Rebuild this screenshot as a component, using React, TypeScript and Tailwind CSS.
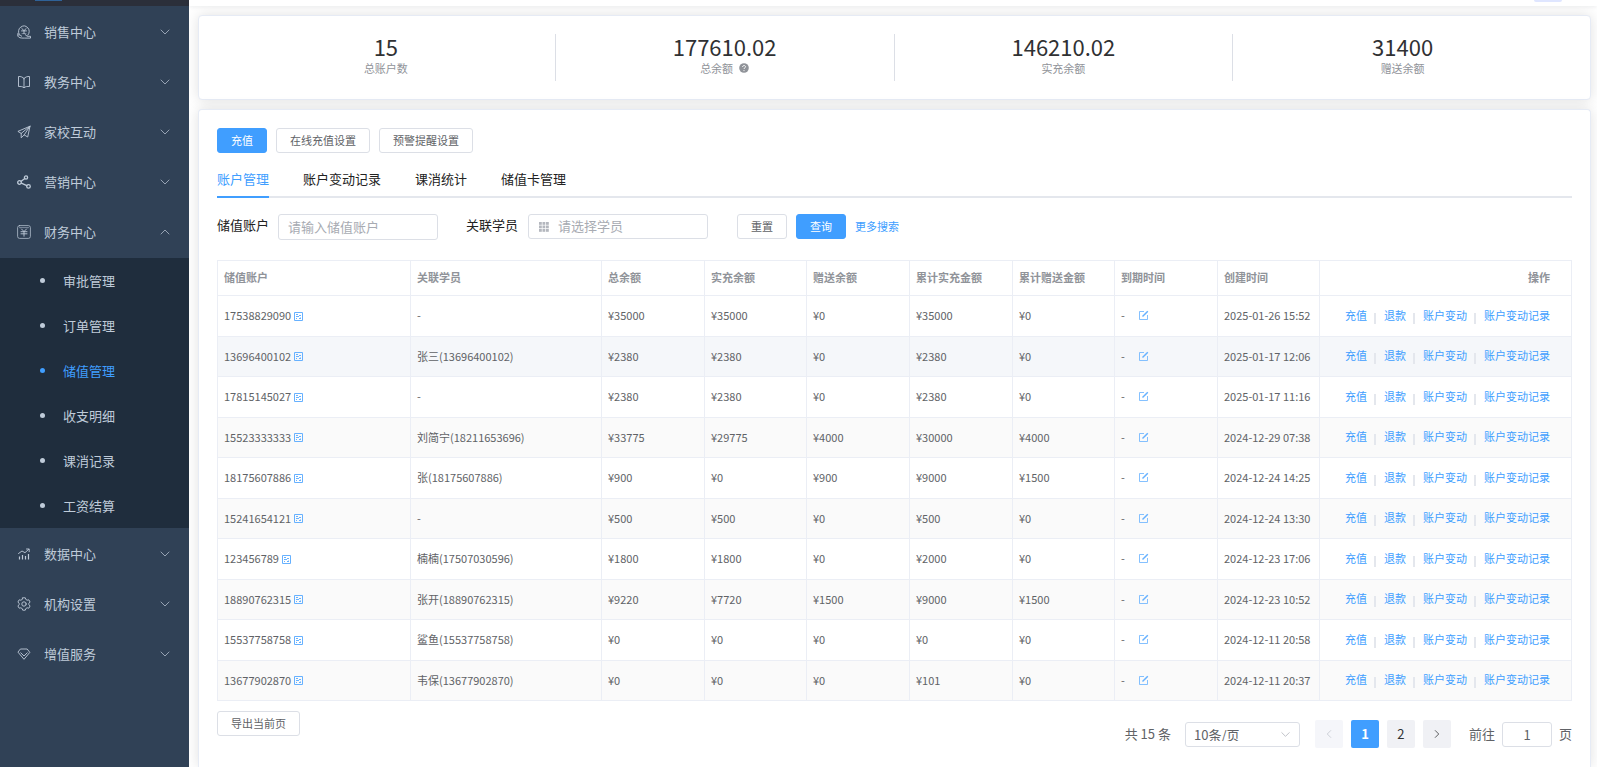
import { useState, type ReactNode } from 'react'
import clsx from 'clsx'

type Account = {
  account: string
  student: string
  total: number
  real: number
  gift: number
  sumReal: number
  sumGift: number
  createdAt: string
}

const accounts: Account[] = [
  { account: '17538829090', student: '-', total: 35000, real: 35000, gift: 0, sumReal: 35000, sumGift: 0, createdAt: '2025-01-26 15:52' },
  { account: '13696400102', student: '张三(13696400102)', total: 2380, real: 2380, gift: 0, sumReal: 2380, sumGift: 0, createdAt: '2025-01-17 12:06' },
  { account: '17815145027', student: '-', total: 2380, real: 2380, gift: 0, sumReal: 2380, sumGift: 0, createdAt: '2025-01-17 11:16' },
  { account: '15523333333', student: '刘简宁(18211653696)', total: 33775, real: 29775, gift: 4000, sumReal: 30000, sumGift: 4000, createdAt: '2024-12-29 07:38' },
  { account: '18175607886', student: '张(18175607886)', total: 900, real: 0, gift: 900, sumReal: 9000, sumGift: 1500, createdAt: '2024-12-24 14:25' },
  { account: '15241654121', student: '-', total: 500, real: 500, gift: 0, sumReal: 500, sumGift: 0, createdAt: '2024-12-24 13:30' },
  { account: '123456789', student: '楠楠(17507030596)', total: 1800, real: 1800, gift: 0, sumReal: 2000, sumGift: 0, createdAt: '2024-12-23 17:06' },
  { account: '18890762315', student: '张开(18890762315)', total: 9220, real: 7720, gift: 1500, sumReal: 9000, sumGift: 1500, createdAt: '2024-12-23 10:52' },
  { account: '15537758758', student: '鲨鱼(15537758758)', total: 0, real: 0, gift: 0, sumReal: 0, sumGift: 0, createdAt: '2024-12-11 20:58' },
  { account: '13677902870', student: '韦保(13677902870)', total: 0, real: 0, gift: 0, sumReal: 101, sumGift: 0, createdAt: '2024-12-11 20:37' },
]

const columns = [
  { label: '储值账户', width: 'w-[193px]' },
  { label: '关联学员', width: 'w-[191px]' },
  { label: '总余额', width: 'w-[103px]' },
  { label: '实充余额', width: 'w-[102px]' },
  { label: '赠送余额', width: 'w-[103px]' },
  { label: '累计实充金额', width: 'w-[103px]' },
  { label: '累计赠送金额', width: 'w-[102px]' },
  { label: '到期时间', width: 'w-[103px]' },
  { label: '创建时间', width: 'w-[102px]' },
  { label: '操作', width: 'w-auto' },
]

const stats = [
  { value: '15', label: '总账户数' },
  { value: '177610.02', label: '总余额', help: true },
  { value: '146210.02', label: '实充余额' },
  { value: '31400', label: '赠送余额' },
]

const tabs = ['账户管理', '账户变动记录', '课消统计', '储值卡管理']
const financeItems = ['审批管理', '订单管理', '储值管理', '收支明细', '课消记录', '工资结算']
const actions = ['充值', '退款', '账户变动', '账户变动记录']

function Glyph({ children, className = 'size-[14px]' }: { children: ReactNode; className?: string }) {
  return (
    <svg
      viewBox="0 0 14 14"
      fill="none"
      stroke="currentColor"
      strokeWidth=".9"
      strokeLinecap="round"
      strokeLinejoin="round"
      className={clsx('shrink-0', className)}
      aria-hidden="true"
    >
      {children}
    </svg>
  )
}

const icons = {
  sales: (
    <Glyph>
      <path d="M2.200 9.200A5.400 5.400 0 1 1 10.800 10.200" />
      <path d="M4.800 3.500 7 5.600l2.200-2.100M4.500 5.900h5M7 5.600v3" />
      <path d="M5 8.600h4" strokeOpacity=".6" />
      <path d="M1 8.200c-.5 1.600-.4 3 .6 3.800 1.600 1.200 4 1.100 6 1.100h5.900v-1.800H10.200L8.200 9.600M1 10c1.500-.7 2.500.2 3.700 1.200" />
    </Glyph>
  ),
  book: (
    <Glyph>
      <path d="M7 3.500C5.800 2 3.500 1.300 1.500 1.500v10c2-.2 4.200 0 5.500 1.300 1.300-1.300 3.500-1.500 5.500-1.300v-10C10.500 1.300 8.200 2 7 3.500zV12.500" />
    </Glyph>
  ),
  plane: (
    <Glyph>
      <path d="M13 1.200.9 6.400l3.300 2L13 1.200 10.700 12 7.200 9.900M4.200 8.400v4.400l3-2.900L13 1.200" />
    </Glyph>
  ),
  share: (
    <Glyph>
      <circle cx="9" cy="2.500" r="1.600" strokeWidth="1.300" />
      <circle cx="2.500" cy="7.500" r="1.800" strokeWidth="1.300" />
      <circle cx="11.500" cy="11.400" r="1.800" strokeWidth="1.300" />
      <path d="M7.800 3.600 4.200 6.300M4.400 8.200l5.400 2.400" strokeWidth="1.300" />
    </Glyph>
  ),
  finance: (
    <Glyph>
      <rect x=".6" y=".6" width="12.800" height="12.800" rx="2" strokeOpacity=".8" />
      <path d="M2.500 2.600h9" strokeOpacity=".6" />
      <path d="M4.500 4 7 6.500 9.500 4M4 6.700h6M4 8.800h6M7 6.500v4.700" />
    </Glyph>
  ),
  data: (
    <Glyph>
      <path d="M2.500 12.500V9.500M5.500 12.500V8M8.500 12.500V9M11.500 12.500V7" strokeWidth="1.200" strokeLinecap="butt" />
      <path d="M1.500 6.500 5 4l3 1.700 3.800-3.500M9.500 2h2.700v2.700" />
    </Glyph>
  ),
  setting: (
    <Glyph>
      <circle cx="7" cy="7" r="2.200" />
      <path d="M5.700.8h2.600l.5 1.600 1.300.8 1.700-.4 1.300 2.200-1.200 1.300v1.400l1.200 1.300-1.300 2.200-1.700-.4-1.300.8-.5 1.600H5.700l-.5-1.600-1.300-.8-1.700.4L.9 9l1.200-1.300V6.300L.9 5l1.300-2.200 1.700.4 1.300-.8z" />
    </Glyph>
  ),
  diamond: (
    <Glyph>
      <path d="M3.800 2h6.400l2.600 3.400L7 12.300 1.200 5.400z" />
      <path d="M3.800 5.800 7 9l3.200-3.200" />
    </Glyph>
  ),
}

function Chevron({ className, direction = 'down' }: { className?: string; direction?: 'down' | 'up' | 'left' | 'right' }) {
  const paths = {
    down: 'M3 5l4 4 4-4',
    up: 'M3 9l4-4 4 4',
    left: 'M9 3L5 7l4 4',
    right: 'M5 3l4 4-4 4',
  }
  return (
    <Glyph className={className ?? 'size-[14px] opacity-80'}>
      <path d={paths[direction]} />
    </Glyph>
  )
}

function CardIcon() {
  return (
    <svg viewBox="0 0 9 9" fill="none" stroke="currentColor" className="size-[9px] shrink-0" aria-hidden="true">
      <path d="M.5.5h8v8h-8z" />
      <path d="M2 2.500h2M5 3.500h2M2 4.500h3" />
      <path d="M5 6.500h2M6.500 5.500v1.500M2 6.500h1" />
    </svg>
  )
}

function EditIcon() {
  return (
    <svg viewBox="0 0 10 10" fill="none" stroke="currentColor" className="size-[10px]" aria-hidden="true">
      <path d="M5 1.500H.5v8h8V5" strokeOpacity=".8" />
      <path d="M3.500 6.500 8.800 1.200" strokeWidth="1.500" />
    </svg>
  )
}

function MenuItem({ icon, label, open }: { icon: ReactNode; label: string; open?: boolean }) {
  return (
    <button type="button" className="flex h-[50px] w-full items-center pl-[17px] pr-[17px] text-left">
      {icon}
      <span className="ml-[13px] flex-1">{label}</span>
      <Chevron direction={open ? 'up' : 'down'} />
    </button>
  )
}

function Sidebar() {
  return (
    <aside className="w-[189px] shrink-0 bg-[#304156] text-[13px] text-[#bfcbd9]">
      <div className="h-1.5 bg-[#2b2f3a] pl-[35px]">
        <div className="h-px w-[27px] bg-[#2f6298]" />
      </div>
      <nav className="pt-px">
        <MenuItem icon={icons.sales} label="销售中心" />
        <MenuItem icon={icons.book} label="教务中心" />
        <MenuItem icon={icons.plane} label="家校互动" />
        <MenuItem icon={icons.share} label="营销中心" />
        <MenuItem icon={icons.finance} label="财务中心" open />
        <ul className="my-px bg-[#1f2d3d]">
          {financeItems.map((item) => (
            <li key={item}>
              <a
                href="#"
                className={clsx('flex h-[45px] items-center gap-[18px] pl-10', item === '储值管理' && 'text-[#409eff]')}
              >
                <span className="size-[5px] rounded-full bg-current" />
                {item}
              </a>
            </li>
          ))}
        </ul>
        <MenuItem icon={icons.data} label="数据中心" />
        <MenuItem icon={icons.setting} label="机构设置" />
        <MenuItem icon={icons.diamond} label="增值服务" />
      </nav>
    </aside>
  )
}

function Button({ children, primary }: { children: ReactNode; primary?: boolean }) {
  return (
    <button
      type="button"
      className={clsx(
        'h-[25px] rounded-[3px] border px-[13px] pb-px text-[11px] leading-none',
        primary ? 'border-[#409eff] bg-[#409eff] text-white' : 'border-[#dcdfe6] bg-white text-[#606266]',
      )}
    >
      {children}
    </button>
  )
}

function Stats() {
  return (
    <section className="grid grid-cols-4 divide-x divide-[#dcdfe6] rounded border border-[#e6ebf5] bg-white p-[18px] text-center shadow-[0_0_14px_rgba(0,0,0,0.12)]">
      {stats.map((stat) => (
        <div key={stat.label} className="h-[47px]">
          <div className="text-[22px] leading-6 text-[#303133]">{stat.value}</div>
          <div className="flex items-center justify-center gap-1.5 pt-px text-[11px] leading-[18px] text-[#909399]">
            {stat.label}
            {stat.help && (
              <svg viewBox="0 0 10 10" className="size-[10px]" aria-hidden="true">
                <circle cx="5" cy="5" r="4.800" fill="#909399" />
                <path d="M3.600 4c0-2 2.900-1.900 2.900-.2C6.500 4.900 5 4.800 5 6" fill="none" stroke="#fff" />
                <circle cx="5" cy="7.600" r=".6" fill="#fff" />
              </svg>
            )}
          </div>
        </div>
      ))}
    </section>
  )
}

function Filters() {
  return (
    <form className="mt-4 flex items-start text-[13px]">
      <label htmlFor="account" className="mr-[9px] leading-[22px] text-[#222]">
        储值账户
      </label>
      <input
        id="account"
        placeholder="请输入储值账户"
        className="h-[26px] w-40 rounded-[3px] border border-[#dcdfe6] px-[9px] pb-0.5 outline-none placeholder:text-[#a8abb2]"
      />
      <label htmlFor="student" className="ml-7 mr-[10px] leading-[22px] text-[#222]">
        关联学员
      </label>
      <div className="flex h-[25px] w-[180px] items-center gap-[9px] rounded-[3px] border border-[#dcdfe6] px-[10px]">
        <svg viewBox="0 0 10 10" fill="#b4b7be" className="size-[10px] shrink-0" aria-hidden="true">
          {[0, 3.5, 7].map((y) => [0, 3.5, 7].map((x) => <rect key={`${x}-${y}`} x={x} y={y} width="2.800" height="2.800" />))}
        </svg>
        <input id="student" placeholder="请选择学员" className="w-full min-w-0 pb-0.5 outline-none placeholder:text-[#a8abb2]" />
      </div>
      <div className="ml-[29px] flex items-center gap-[9px]">
        <Button>重置</Button>
        <Button primary>查询</Button>
        <a href="#" className="pb-px text-[11px] text-[#409eff]">
          更多搜索
        </a>
      </div>
    </form>
  )
}

function AccountTable() {
  return (
    <table className="mt-5 w-full table-fixed border-separate border-spacing-0 border-l border-t border-[#ebeef5] text-left text-[11px] leading-4 text-[#606266]">
      <thead>
        <tr className="h-[35px] text-[#909399]">
          {columns.map((col) => (
            <th
              key={col.label}
              className={clsx('border-b border-r border-[#ebeef5] px-[6px] pb-0.5 pt-0 font-bold last:pr-[21px] last:text-right', col.width)}
            >
              {col.label}
            </th>
          ))}
        </tr>
      </thead>
      <tbody className="[&_td]:border-b [&_td]:border-r [&_td]:border-[#ebeef5] [&_td]:px-[6px] [&_td]:pb-0.5 [&_td]:pt-0">
        {accounts.map((row, i) => (
          <tr key={row.account} className={clsx('h-10 odd:h-[41px]', i === 1 ? 'bg-[#f5f7fa]' : 'even:bg-[#fafafa]')}>
            <td>
              <div className="flex items-center gap-[3px]">
                {row.account}
                <button type="button" aria-label="查看储值卡" className="pt-0.5 text-[#66b1ff]">
                  <CardIcon />
                </button>
              </div>
            </td>
            <td>{row.student}</td>
            <td>¥{row.total}</td>
            <td>¥{row.real}</td>
            <td>¥{row.gift}</td>
            <td>¥{row.sumReal}</td>
            <td>¥{row.sumGift}</td>
            <td>
              <div className="flex items-center gap-[14px]">
                -
                <button type="button" aria-label="修改到期时间" className="text-[#66b1ff]">
                  <EditIcon />
                </button>
              </div>
            </td>
            <td>{row.createdAt}</td>
            <td>
              <div className="flex justify-end pr-[15px] text-[#409eff]">
                {actions.map((action, n) => (
                  <div key={action} className="flex">
                    {n > 0 && <span className="ml-[7px] mr-2 mt-1.5 h-[11px] w-0.5 bg-[#e4e7ed]" />}
                    <a href="#">{action}</a>
                  </div>
                ))}
              </div>
            </td>
          </tr>
        ))}
      </tbody>
    </table>
  )
}

function Pagination() {
  const [page, setPage] = useState(1)
  return (
    <div className="mt-[9px] flex items-center text-[13px] text-[#606266]">
      <span className="mr-[14px]">共 15 条</span>
      <div className="relative mr-[15px]">
        <select aria-label="每页条数" className="h-[25px] w-[115px] appearance-none rounded-[3px] border border-[#dcdfe6] bg-white px-2 leading-none">
          <option>10条/页</option>
          <option>20条/页</option>
        </select>
        <Chevron className="pointer-events-none absolute right-2 top-1.5 size-[13px] text-[#b4b7be]" />
      </div>
      <div className="flex gap-2">
        <button type="button" disabled aria-label="上一页" className="flex size-7 items-center justify-center rounded-xs bg-[#f5f6fa] text-[#c0c4cc]">
          <Chevron direction="left" className="size-3" />
        </button>
        {[1, 2].map((n) => (
          <button
            key={n}
            type="button"
            onClick={() => setPage(n)}
            className={clsx('size-7 rounded-xs', page === n ? 'bg-[#409eff] font-bold text-white' : 'bg-[#f0f1f5] text-[#303133]')}
          >
            {n}
          </button>
        ))}
        <button type="button" aria-label="下一页" className="flex size-7 items-center justify-center rounded-xs bg-[#f0f1f5] text-[#303133]">
          <Chevron direction="right" className="size-3" />
        </button>
      </div>
      <label htmlFor="jump" className="ml-[18px] mr-[7px]">
        前往
      </label>
      <input id="jump" defaultValue="1" className="mr-[7px] h-[25px] w-[50px] rounded-[3px] border border-[#dcdfe6] text-center outline-none" />
      <span>页</span>
    </div>
  )
}

export default function App() {
  return (
    <div className="flex h-screen overflow-hidden bg-white font-['Noto_Sans_CJK_SC',sans-serif]">
      <Sidebar />
      <div className="flex min-w-0 flex-1 flex-col">
        <header className="flex h-1.5 shrink-0 items-start justify-end bg-white pr-[35px] shadow-[0_1px_4px_rgba(0,21,41,0.08)]">
          <div className="h-0.5 w-7 rounded-b bg-[#dfe6ff]" />
        </header>
        <main className="flex flex-1 flex-col gap-[9px] overflow-hidden pl-[9px] pr-1.5 pt-[9px]">
          <Stats />
          <section className="flex-1 rounded-t border border-b-0 border-[#e6ebf5] bg-white p-[18px] shadow-[0_0_14px_rgba(0,0,0,0.12)]">
            <div className="flex gap-[9px]">
              <Button primary>充值</Button>
              <Button>在线充值设置</Button>
              <Button>预警提醒设置</Button>
            </div>
            <div className="mt-[10px] flex gap-[34px] border-b-2 border-[#e4e7ed] text-[13px] text-[#222]">
              {tabs.map((tab, i) => (
                <button
                  key={tab}
                  type="button"
                  className={clsx('-mb-0.5 h-[35px] border-b-2 pb-0.5', i === 0 ? 'border-[#409eff] text-[#409eff]' : 'border-transparent')}
                >
                  {tab}
                </button>
              ))}
            </div>
            <Filters />
            <AccountTable />
            <div className="mt-[10px] flex items-start justify-between">
              <Button>导出当前页</Button>
              <Pagination />
            </div>
          </section>
        </main>
      </div>
    </div>
  )
}
